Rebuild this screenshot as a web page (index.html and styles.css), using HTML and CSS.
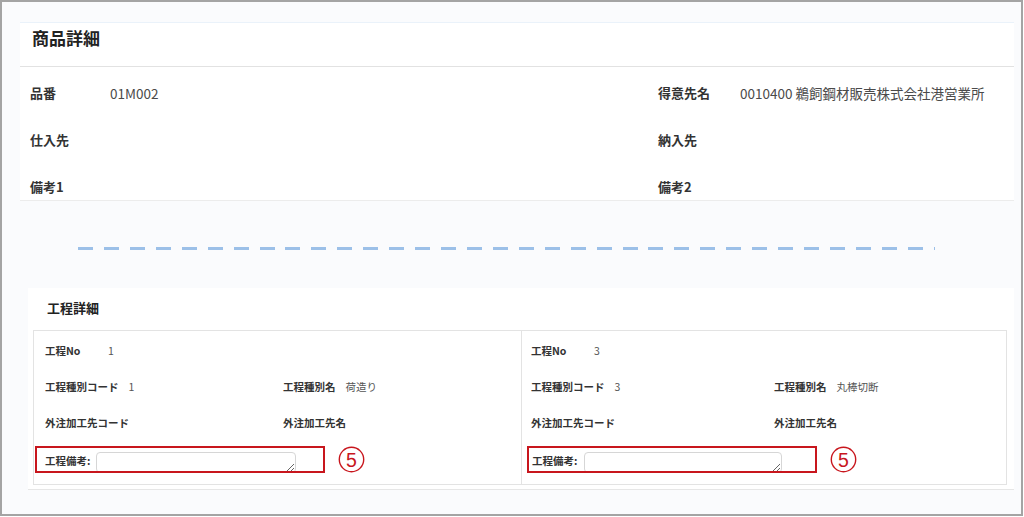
FILE: index.html
```html
<!DOCTYPE html>
<html lang="ja">
<head>
<meta charset="utf-8">
<title>商品詳細</title>
<link rel="stylesheet" href="styles.css">
</head>
<body>
<div class="frame">
  <section class="card product">
    <header class="card-head"><h1>商品詳細</h1></header>
    <div class="info-grid">
      <span class="lbl">品番</span><span class="val">01M002</span>
      <span class="lbl">得意先名</span><span class="val">0010400 鵜飼鋼材販売株式会社港営業所</span>
      <span class="lbl">仕入先</span><span class="val"></span>
      <span class="lbl">納入先</span><span class="val"></span>
      <span class="lbl">備考1</span><span class="val"></span>
      <span class="lbl">備考2</span><span class="val"></span>
    </div>
  </section>

  <div class="divider"><div class="dash"></div></div>

  <section class="card process">
    <h2>工程詳細</h2>
    <div class="panel">
      <div class="proc-col first">
        <div class="row"><div class="pair"><span class="plbl short">工程No</span><span class="pval">1</span></div></div>
        <div class="row">
          <div class="pair"><span class="plbl">工程種別コード</span><span class="pval">1</span></div>
          <div class="pair"><span class="plbl">工程種別名</span><span class="pval">荷造り</span></div>
        </div>
        <div class="row">
          <div class="pair"><span class="plbl">外注加工先コード</span><span class="pval"></span></div>
          <div class="pair"><span class="plbl">外注加工先名</span><span class="pval"></span></div>
        </div>
        <div class="note-row">
          <div class="note-box"><span class="plbl note-lbl">工程備考:</span><textarea class="note-input"></textarea></div>
          <svg class="mark" width="27" height="27" viewBox="0 0 27 27"><circle cx="13.5" cy="13.5" r="12.2" fill="none" stroke="#c8161d" stroke-width="1.4"/><text x="13.5" y="20.8" text-anchor="middle" font-family="Liberation Sans, Arial, sans-serif" font-size="19.5" fill="#c8161d">5</text></svg>
        </div>
      </div>
      <div class="proc-col second">
        <div class="row"><div class="pair"><span class="plbl short">工程No</span><span class="pval">3</span></div></div>
        <div class="row">
          <div class="pair"><span class="plbl">工程種別コード</span><span class="pval">3</span></div>
          <div class="pair"><span class="plbl">工程種別名</span><span class="pval">丸棒切断</span></div>
        </div>
        <div class="row">
          <div class="pair"><span class="plbl">外注加工先コード</span><span class="pval"></span></div>
          <div class="pair"><span class="plbl">外注加工先名</span><span class="pval"></span></div>
        </div>
        <div class="note-row">
          <div class="note-box"><span class="plbl note-lbl">工程備考:</span><textarea class="note-input"></textarea></div>
          <svg class="mark" width="27" height="27" viewBox="0 0 27 27"><circle cx="13.5" cy="13.5" r="12.2" fill="none" stroke="#c8161d" stroke-width="1.4"/><text x="13.5" y="20.8" text-anchor="middle" font-family="Liberation Sans, Arial, sans-serif" font-size="19.5" fill="#c8161d">5</text></svg>
        </div>
      </div>
    </div>
  </section>
</div>
</body>
</html>
```
FILE: styles.css
```css
html, body {
  margin: 0;
  padding: 0;
  background: #ffffff;
}

body {
  font-family: "Noto Sans CJK JP", "Noto Sans", "Liberation Sans", sans-serif;
  color: #333;
}

.frame {
  box-sizing: border-box;
  width: 1023px;
  height: 516px;
  border: 2px solid #a4a4a4;
  background: #fafbfd;
  padding: 20px 7px 0 18px;
  overflow: hidden;
}

.card {
  background: #ffffff;
}

.product {
  width: 994px;
}

.card-head {
  box-sizing: border-box;
  height: 45px;
  border-top: 1px solid #eaf2fa;
  border-bottom: 1px solid #e2e2e2;
  padding-left: 12px;
}

.card-head h1 {
  margin: 0;
  font-size: 17px;
  font-weight: 700;
  line-height: 30px;
  color: #222;
}

.info-grid {
  box-sizing: border-box;
  height: 134px;
  display: grid;
  grid-template-columns: 80px 548px 82px 1fr;
  grid-auto-rows: 47px;
  align-items: center;
  padding: 2px 0 0 10px;
  border-bottom: 1px solid #ececec;
  font-size: 13px;
}

.info-grid .lbl {
  font-weight: 700;
  color: #333;
}

.info-grid .val {
  color: #4a4a4a;
  font-size: 13.5px;
}

.divider {
  height: 87px;
  box-sizing: border-box;
  padding-top: 46px;
}

.dash {
  margin-left: 58px;
  width: 857px;
  height: 3px;
  background: repeating-linear-gradient(to right, #9cc0e8 0 15px, transparent 15px 25.93px);
}

.process {
  margin-left: 8px;
  width: 986px;
  box-sizing: border-box;
  padding-bottom: 4px;
  border-bottom: 1px solid #e6e6e6;
}

.process h2 {
  margin: 0;
  height: 42px;
  line-height: 40px;
  padding-left: 19px;
  font-size: 13px;
  font-weight: 700;
  color: #222;
}

.panel {
  box-sizing: border-box;
  margin-left: 5px;
  width: 974px;
  height: 155px;
  border: 1px solid #e3e3e3;
  display: grid;
  grid-template-columns: 487px 1fr;
}

.proc-col {
  padding-top: 1px;
}

.proc-col.first {
  padding-left: 11px;
}

.proc-col.second {
  border-left: 1px solid #e3e3e3;
  padding-left: 9px;
}

.row {
  display: flex;
  align-items: center;
  height: 36px;
}

.pair {
  width: 243px;
  display: flex;
  align-items: center;
  gap: 10px;
}

.plbl {
  font-size: 10.5px;
  font-weight: 700;
  color: #333;
  white-space: nowrap;
}

.plbl.short {
  width: 53px;
}

.pval {
  font-size: 10.5px;
  color: #555;
}

.note-row {
  display: flex;
  align-items: center;
  margin-top: 6px;
  margin-left: -10px;
}

.proc-col.second .note-row {
  margin-left: -4px;
}

.note-box {
  box-sizing: border-box;
  width: 290px;
  height: 27px;
  border: 2px solid #c8161d;
  padding-left: 8px;
  display: flex;
  align-items: flex-start;
  gap: 6px;
  overflow: hidden;
}

.proc-col.second .note-box {
  padding-left: 3px;
  gap: 7px;
}

.note-lbl {
  line-height: 23px;
  margin-top: 1px;
}

.note-input {
  box-sizing: border-box;
  margin: 4px 0 0 0;
  width: 200px;
  height: 21px;
  padding: 2px 4px;
  border: 1px solid #d6d6d6;
  border-radius: 4px;
  background: #fff;
  font-size: 10px;
  font-family: "Noto Sans CJK JP", sans-serif;
}

.proc-col.second .note-input {
  width: 198px;
}

.mark {
  margin-left: 13px;
  display: block;
}
```
